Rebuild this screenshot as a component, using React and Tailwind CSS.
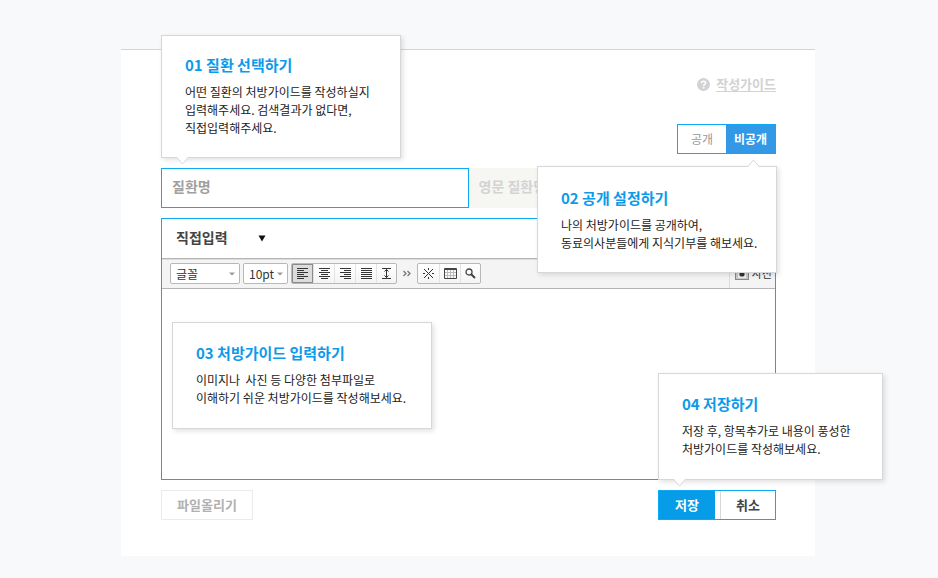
import React from "react";

function GuideBubble({ title, lines, className, arrow, arrowClass }) {
  return (
    <aside
      className={`absolute z-10 whitespace-nowrap border border-[#d5d7da] bg-white pl-[23px] shadow-[2px_2px_5px_rgba(0,0,0,0.12)] ${className}`}
    >
      <h2 className="text-[15px] font-bold leading-5 text-[#0c9bea]">{title}</h2>
      <p className="mt-2 whitespace-pre text-xs leading-[18px] text-[#222]">{lines.join("\n")}</p>
      {arrow === "down" && (
        <svg className={`absolute top-full ${arrowClass}`} width="13" height="9" viewBox="0 0 13 9" aria-hidden="true">
          <path d="M0.5 0 6.5 7 12.5 0" fill="#fff" stroke="#d5d7da" />
          <path d="M1 -1H12V0.3H1z" fill="#fff" />
        </svg>
      )}
      {arrow === "up" && (
        <svg className={`absolute bottom-full ${arrowClass}`} width="13" height="8" viewBox="0 0 13 8" aria-hidden="true">
          <path d="M0.5 8 6.5 1 12.5 8" fill="#fff" stroke="#d5d7da" />
        </svg>
      )}
    </aside>
  );
}

const alignIcons = [
  { label: "왼쪽 정렬", active: true, rows: [[0, 11], [0, 7], [0, 11], [0, 7], [0, 11], [0, 7]] },
  { label: "가운데 정렬", rows: [[0, 11], [2, 7], [0, 11], [2, 7], [0, 11], [2, 7]] },
  { label: "오른쪽 정렬", rows: [[0, 11], [4, 7], [0, 11], [4, 7], [0, 11], [4, 7]] },
  { label: "양쪽 정렬", rows: [[0, 11], [0, 11], [0, 11], [0, 11], [0, 11], [0, 11]] },
];

function ToolButton({ label, active, children }) {
  return (
    <button
      type="button"
      aria-label={label}
      className={`flex h-full w-[21px] items-center justify-center border-l border-[#e3e3e3] first:border-l-0 last:w-5 ${
        active ? "bg-[#dcdcdc] shadow-[inset_0_0_0_1px_#8a8a8a]" : ""
      }`}
    >
      {children}
    </button>
  );
}

function ToolGroup({ children }) {
  return (
    <div className="flex h-[21px] overflow-hidden rounded-[2px] border border-[#b8b8b8] bg-linear-to-b from-white to-[#f4f4f4]">
      {children}
    </div>
  );
}

function ToolSelect({ label, value, className }) {
  return (
    <div className={`relative h-[21px] ${className}`}>
      <select
        aria-label={label}
        className="block h-full w-full appearance-none rounded-[2px] border border-[#b8b8b8] bg-white pl-[5px] text-xs leading-[18px] text-[#333]"
      >
        <option>{value}</option>
      </select>
      <svg className="pointer-events-none absolute right-[5px] top-[9px]" width="6" height="4" viewBox="0 0 6 4" aria-hidden="true">
        <path d="M0 0.5H6L3 3.5z" fill="#999" />
      </svg>
    </div>
  );
}

function Toolbar() {
  return (
    <div className="flex h-[31px] items-center border-y border-[#b5b5b5] bg-[#f4f4f4] pl-2 shadow-[inset_0_1px_0_#dcdcdc]">
      <ToolSelect label="글꼴" value="글꼴" className="w-[70px]" />
      <ToolSelect label="글자 크기" value="10pt" className="ml-[3px] mr-[3px] w-[45px]" />
      <ToolGroup>
        {alignIcons.map((icon) => (
          <ToolButton key={icon.label} label={icon.label} active={icon.active}>
            <svg width="11" height="11" viewBox="0 0 11 11" shapeRendering="crispEdges" aria-hidden="true">
              {icon.rows.map(([x, w], i) => (
                <rect key={i} x={x} y={i * 2} width={w} height="1" fill="#333" />
              ))}
            </svg>
          </ToolButton>
        ))}
        <ToolButton label="줄 간격">
          <svg width="9" height="11" viewBox="0 0 9 11" fill="none" stroke="#333" aria-hidden="true">
            <path d="M0 0.5H9M0 10.5H9M4.5 1.5V9.5M2.5 3.5 4.5 1.5 6.5 3.5M2.5 7.5 4.5 9.5 6.5 7.5" />
          </svg>
        </ToolButton>
      </ToolGroup>
      <button type="button" aria-label="더보기" className="mx-1.5 flex w-2 justify-center">
        <svg width="8" height="7" viewBox="0 0 8 7" fill="none" stroke="#777" strokeWidth="1.3" aria-hidden="true">
          <path d="M0.5 1 3 3.5 0.5 6M4.5 1 7 3.5 4.5 6" />
        </svg>
      </button>
      <ToolGroup>
        <ToolButton label="특수문자">
          <svg width="11" height="11" viewBox="0 0 11 11" fill="#333" shapeRendering="crispEdges" aria-hidden="true">
            <path d="M1 1h1v1H1zM2 2h1v1H2zM3 3h1v1H3zM4 4h1v1H4zM5 5h1v1H5zM6 6h1v1H6zM7 7h1v1H7zM8 8h1v1H8zM9 9h1v1H9zM9 1h1v1H9zM8 2h1v1H8zM7 3h1v1H7zM6 4h1v1H6zM4 6h1v1H4zM3 7h1v1H3zM2 8h1v1H2zM1 9h1v1H1z" />
            <path d="M5 0h1v2H5zM5 9h1v2H5zM0 5h2v1H0zM9 5h2v1H9z" />
          </svg>
        </ToolButton>
        <ToolButton label="표">
          <svg width="13" height="11" viewBox="0 0 13 11" fill="none" aria-hidden="true">
            <path d="M1 4.5H12M1 7.5H12M3.5 2V10M6.5 2V10M9.5 2V10" stroke="#bbb" />
            <path d="M0.5 0.5H12.5V10.5H0.5zM0.5 1.5H12.5" stroke="#444" />
          </svg>
        </ToolButton>
        <ToolButton label="찾기">
          <svg width="11" height="11" viewBox="0 0 11 11" fill="none" stroke="#444" aria-hidden="true">
            <circle cx="4" cy="4" r="3" strokeWidth="1.3" />
            <path d="M6.2 6.2 10 10" strokeWidth="2" />
          </svg>
        </ToolButton>
      </ToolGroup>
      <button
        type="button"
        className="ml-auto flex h-full items-center gap-[3px] border-l border-[#ddd] pl-[5px] pr-[3px] text-[11px] text-[#333]"
      >
        <svg width="14" height="12" viewBox="0 0 14 12" aria-hidden="true">
          <rect x="0.5" y="0.5" width="13" height="11" fill="#ccc" stroke="#888" />
          <rect x="3" y="2" width="8" height="8" fill="#eee" />
          <circle cx="7" cy="6" r="2.6" fill="#333" />
        </svg>
        사진
      </button>
    </div>
  );
}

export default function App() {
  return (
    <div className="min-h-screen bg-[#f8f9fb] pb-[22px] pl-[121px] pr-[123px] pt-[49px] font-['Noto_Sans_CJK_KR','Noto_Sans',sans-serif]">
      <main className="border-t border-[#b5dff0] bg-white pb-9 pl-10 pr-[39px] pt-6">
        <div className="flex justify-end">
          <a href="#guide" className="flex items-center gap-1.5 text-[13px] font-bold leading-5 text-[#d2d2d2]">
            <svg width="13" height="13" viewBox="0 0 13 13" aria-hidden="true">
              <circle cx="6.5" cy="6.5" r="6.5" fill="#d2d2d2" />
              <path d="M4.5 5.2C4.5 2.6 8.6 2.7 8.6 5 8.6 6.4 6.6 6.2 6.6 8" fill="none" stroke="#fff" strokeWidth="1.5" />
              <rect x="5.8" y="9" width="1.6" height="1.6" fill="#fff" />
            </svg>
            <span className="underline underline-offset-2">작성가이드</span>
          </a>
        </div>

        <div className="mt-[30px] flex justify-end">
          <div className="relative flex h-[30px] border border-[#0caaf5] text-xs">
            <button type="button" className="w-12 text-[#999]">공개</button>
            <button type="button" className="w-[49px] bg-[#3399e6] font-bold text-white">비공개</button>
            <GuideBubble
              title="02 공개 설정하기"
              lines={["나의 처방가이드를 공개하여,", "동료의사분들에게 지식기부를 해보세요."]}
              className="-right-0.5 top-full mt-[13px] w-60 pb-5 pt-[21px]"
              arrow="up"
              arrowClass="right-4"
            />
          </div>
        </div>

        <div className="mt-3.5 flex h-10">
          <div className="relative flex-1">
            <input
              type="text"
              aria-label="질환명"
              placeholder="질환명"
              className="block h-full w-full border border-[#0caaf5] bg-white px-2.5 pb-1 text-sm font-bold text-[#555] placeholder:text-[#a0a0a0]"
            />
            <GuideBubble
              title="01 질환 선택하기"
              lines={["어떤 질환의 처방가이드를 작성하실지", "입력해주세요. 검색결과가 없다면,", "직접입력해주세요."]}
              className="bottom-full left-0 mb-2.5 w-60 pb-5 pt-[19px]"
              arrow="down"
              arrowClass="left-3.5"
            />
          </div>
          <input
            type="text"
            aria-label="영문 질환명"
            placeholder="영문 질환명"
            className="block h-full w-1/2 bg-[#f6f6f3] px-2.5 pb-1 text-sm font-bold text-[#999] placeholder:text-[#d3d3d3]"
          />
        </div>

        <section className="mt-2.5 border border-[#0caaf5]">
          <div className="flex h-[39px] items-center pb-1 pl-3.5">
            <div className="relative w-[90px]">
              <select
                aria-label="입력 방식"
                className="block w-full appearance-none bg-transparent text-sm font-bold leading-5 text-[#444]"
              >
                <option>직접입력</option>
              </select>
              <svg className="pointer-events-none absolute right-0 top-2" width="8" height="7" viewBox="0 0 8 7" aria-hidden="true">
                <path d="M0.5 0.5H7.5L4 6.5z" fill="#111" />
              </svg>
            </div>
          </div>
          <Toolbar />
          <div className="relative">
            <textarea aria-label="처방가이드 내용" className="block h-[190px] w-full resize-none bg-white p-2.5 text-xs" />
            <GuideBubble
              title="03 처방가이드 입력하기"
              lines={["이미지나  사진 등 다양한 첨부파일로", "이해하기 쉬운 처방가이드를 작성해보세요."]}
              className="left-2.5 top-[33px] w-[260px] pb-[21px] pt-5"
            />
          </div>
        </section>

        <div className="mt-2.5 flex justify-between">
          <button type="button" className="h-[30px] w-[92px] border border-[#ebebeb] text-[13px] font-bold text-[#b0b0b0]">
            파일올리기
          </button>
          <div className="relative flex h-[30px] border border-[#0caaf5] text-[13px] font-bold">
            <button type="submit" className="w-14 bg-[#069ce8] text-white">저장</button>
            <button type="button" className="ml-[5px] w-[55px] border-l border-[#d8d8d8] text-[#444]">취소</button>
            <GuideBubble
              title="04 저장하기"
              lines={["저장 후, 항목추가로 내용이 풍성한", "처방가이드를 작성해보세요."]}
              className="-left-px bottom-full mb-[11px] w-[225px] pb-[21px] pt-5 font-normal"
              arrow="down"
              arrowClass="left-3.5"
            />
          </div>
        </div>
      </main>
    </div>
  );
}
